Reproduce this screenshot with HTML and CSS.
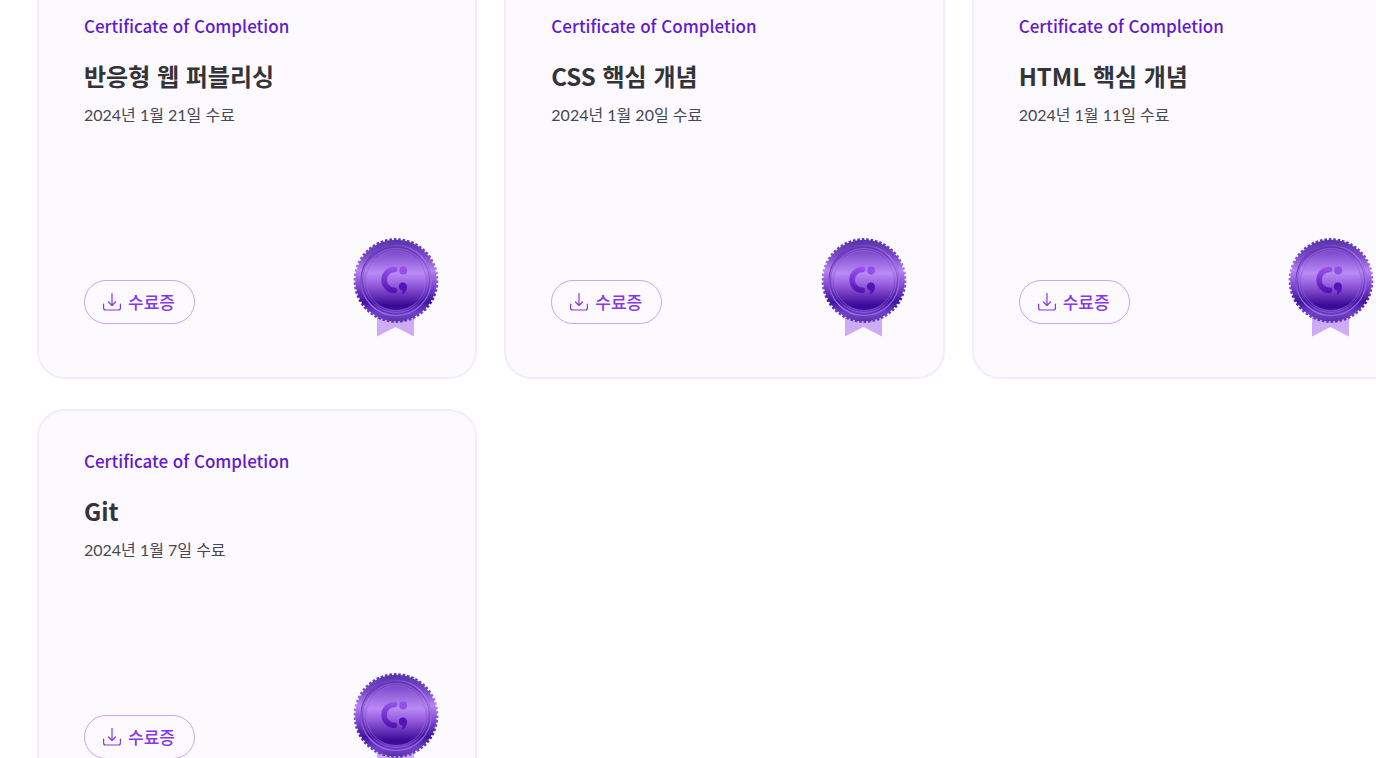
FILE: index.html
```html
<!DOCTYPE html>
<html lang="ko">
<head>
    <meta charset="UTF-8">
    <meta name="viewport" content="width=device-width, initial-scale=1.0">
    <title>수료증</title>
    <link rel="stylesheet" href="styles.css">
</head>
<body>

<!-- Shared icons -->
<svg class="icon-defs" aria-hidden="true">
    <defs>
        <linearGradient id="medal-edge" x1="0" y1="0" x2="0" y2="1">
            <stop offset="0" stop-color="#5a33ad"/>
            <stop offset="0.2" stop-color="#7a48cb"/>
            <stop offset="0.38" stop-color="#b584f1"/>
            <stop offset="0.52" stop-color="#8d56d8"/>
            <stop offset="0.76" stop-color="#4114a0"/>
            <stop offset="0.9" stop-color="#7040cb"/>
            <stop offset="1" stop-color="#5b34ac"/>
        </linearGradient>
        <linearGradient id="medal-face" x1="0" y1="0" x2="0" y2="1">
            <stop offset="0" stop-color="#7a47cb"/>
            <stop offset="0.38" stop-color="#b98bf4"/>
            <stop offset="0.55" stop-color="#9a63e2"/>
            <stop offset="0.92" stop-color="#3a0896"/>
            <stop offset="1" stop-color="#4210a0"/>
        </linearGradient>
        <linearGradient id="medal-ring" x1="0" y1="0" x2="1" y2="1">
            <stop offset="0" stop-color="#4d229d"/>
            <stop offset="0.5" stop-color="#a777e6"/>
            <stop offset="1" stop-color="#8a5ad6"/>
        </linearGradient>
        <linearGradient id="medal-logo" gradientUnits="userSpaceOnUse" x1="0" y1="29" x2="0" y2="58">
            <stop offset="0" stop-color="#9d58ee"/>
            <stop offset="0.5" stop-color="#7430d0"/>
            <stop offset="1" stop-color="#4709a5"/>
        </linearGradient>
    </defs>
    <symbol id="medal" viewBox="0 0 86 100">
        <path d="M24 76h37v23.500L42.500 90 24 99.500z" fill="#cfabf6"/>
        <circle cx="43" cy="43.500" r="40.800" fill="url(#medal-edge)"/>
        <circle cx="43" cy="43.500" r="41" fill="none" stroke="url(#medal-edge)" stroke-width="2.800" pathLength="116" stroke-dasharray="1.150 0.850"/>
        <circle cx="43" cy="43.500" r="35" fill="none" stroke="url(#medal-ring)" stroke-width="1.200"/>
        <circle cx="43" cy="43.500" r="33.500" fill="none" stroke="#4a1ba0" stroke-width="0.800" opacity="0.4"/>
        <circle cx="43" cy="43.500" r="32" fill="none" stroke="#b98bf0" stroke-width="0.700" opacity="0.5"/>
        <circle cx="43" cy="43.500" r="30" fill="url(#medal-face)" stroke="#9866dc" stroke-width="0.600"/>
        <path d="M41.500 32.500a10.300 10.300 0 0 0 0 20.800" fill="none" stroke="url(#medal-logo)" stroke-width="5.500" stroke-linecap="round"/>
        <circle cx="50.200" cy="33.500" r="3.900" fill="#924ee5"/>
        <path d="M49.800 45.500c2.500 0 4.200 1.700 4.200 4.300 0 3.700-2 6.700-5.300 8.200.7-1.700.8-3 .6-4.500-2.200-.1-3.500-1.800-3.500-4 0-2.300 1.700-4 4-4z" fill="#5413b5"/>
    </symbol>
    <symbol id="download" viewBox="0 0 18 18">
        <path d="M9 .5v12M5.500 9 9 12.500 12.500 9M.6 11v4c0 1.200.8 2 2 2h12.800c1.200 0 2-.8 2-2v-4" fill="none" stroke="currentColor" stroke-width="1.200" stroke-linecap="round" stroke-linejoin="round"/>
    </symbol>
</svg>

<main class="certificate-list">
    <article class="certificate">
        <p class="certificate-label">Certificate of Completion</p>
        <h2 class="certificate-title">반응형 웹 퍼블리싱</h2>
        <p class="certificate-date">2024년 1월 21일 수료</p>
        <div class="certificate-footer">
            <button type="button" class="download-btn"><svg class="download-icon" aria-hidden="true"><use href="#download"/></svg>수료증</button>
            <svg class="medal" aria-hidden="true"><use href="#medal"/></svg>
        </div>
    </article>

    <article class="certificate">
        <p class="certificate-label">Certificate of Completion</p>
        <h2 class="certificate-title">CSS 핵심 개념</h2>
        <p class="certificate-date">2024년 1월 20일 수료</p>
        <div class="certificate-footer">
            <button type="button" class="download-btn"><svg class="download-icon" aria-hidden="true"><use href="#download"/></svg>수료증</button>
            <svg class="medal" aria-hidden="true"><use href="#medal"/></svg>
        </div>
    </article>

    <article class="certificate">
        <p class="certificate-label">Certificate of Completion</p>
        <h2 class="certificate-title">HTML 핵심 개념</h2>
        <p class="certificate-date">2024년 1월 11일 수료</p>
        <div class="certificate-footer">
            <button type="button" class="download-btn"><svg class="download-icon" aria-hidden="true"><use href="#download"/></svg>수료증</button>
            <svg class="medal" aria-hidden="true"><use href="#medal"/></svg>
        </div>
    </article>

    <article class="certificate">
        <p class="certificate-label">Certificate of Completion</p>
        <h2 class="certificate-title">Git</h2>
        <p class="certificate-date">2024년 1월 7일 수료</p>
        <div class="certificate-footer">
            <button type="button" class="download-btn"><svg class="download-icon" aria-hidden="true"><use href="#download"/></svg>수료증</button>
            <svg class="medal" aria-hidden="true"><use href="#medal"/></svg>
        </div>
    </article>
</main>

</body>
</html>
```
FILE: styles.css
```css
/* General */
* {
    box-sizing: border-box;
}

body {
    margin: 0;
    background: #fff;
    color: #333338;
    font-family: 'Noto Sans CJK KR', sans-serif;
    overflow: hidden;
}

.icon-defs {
    position: absolute;
    width: 0;
    height: 0;
}

/* Certificate grid, the first row starts above the fold */
.certificate-list {
    display: grid;
    grid-template-columns: repeat(3, 1fr);
    gap: 30px 27px;
    width: calc(100% - 1px);
    margin: -26px 0 0 37px;
}

.certificate {
    display: flex;
    flex-direction: column;
    min-height: 405px;
    padding: 37px 36px 40px 45px;
    background: #fcfaff;
    border: 2px solid #f3ebff;
    border-radius: 28px;
}

.certificate-label {
    margin: 0;
    color: #6219cd;
    font-size: 17px;
    font-weight: 500;
    line-height: 26px;
}

.certificate-title {
    margin: 19px 0 0;
    font-size: 24px;
    font-weight: 700;
    line-height: 36px;
}

.certificate-date {
    margin: 9px 0 0;
    color: #47474f;
    font-family: Lato, 'Noto Sans CJK KR', sans-serif;
    font-size: 16px;
    line-height: 24px;
}

.certificate-footer {
    display: flex;
    align-items: flex-end;
    justify-content: space-between;
    margin-top: auto;
}

/* Download button */
.download-btn {
    display: flex;
    align-items: center;
    gap: 7px;
    height: 44px;
    margin-bottom: 13px;
    padding: 0 19px 1px 18px;
    background: transparent;
    border: 1px solid #c9a5f7;
    border-radius: 22px;
    color: #8437ec;
    font-family: inherit;
    font-size: 17px;
    font-weight: 500;
    cursor: pointer;
}

.download-icon {
    width: 18px;
    height: 18px;
}

.medal {
    width: 86px;
    height: 100px;
}
```
